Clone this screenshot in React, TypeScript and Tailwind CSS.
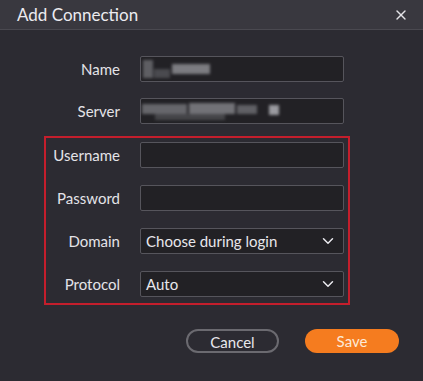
import { ChevronDown, X } from "lucide-react";

type RowProps = {
  label: string;
  children: React.ReactNode;
};

function Row({ label, children }: RowProps) {
  return (
    <div className="flex flex-row items-center gap-5">
      <label className="w-[74px] whitespace-nowrap text-right text-[15px] text-[#e4e3e8]">
        {label}
      </label>
      {children}
    </div>
  );
}

function Field({ children, className = "" }: { children?: React.ReactNode; className?: string }) {
  return (
    <div
      className={`relative flex h-[26px] w-[204px] items-center overflow-hidden rounded-[2px] border border-[#56555c] bg-[#222125] ${className}`}
    >
      {children}
    </div>
  );
}

function Select({ value, className = "" }: { value: string; className?: string }) {
  return (
    <Field className={className}>
      <span className="pl-[5px] text-[15px] text-[#e8e7ec]">{value}</span>
      <ChevronDown className="absolute right-[6px] h-[18px] w-[18px] text-[#e8e7ec]" strokeWidth={2} />
    </Field>
  );
}

function Blurred({ blocks }: { blocks: { x: number; w: number; c: string; y?: number; h?: number }[] }) {
  return (
    <div className="absolute inset-0 blur-[1.5px]">
      {blocks.map((b, i) => (
        <div
          key={i}
          className="absolute"
          style={{ left: b.x, width: b.w, top: b.y ?? 6, height: b.h ?? 12, background: b.c }}
        />
      ))}
    </div>
  );
}

export default function App() {
  return (
    <div
      className="flex h-[381px] w-[423px] flex-col bg-[#2c2b32]"
      style={{ fontFamily: "Lato, 'Noto Sans', sans-serif" }}
    >
      <div className="flex h-[30px] flex-row items-center justify-between border-b border-[#4a4950] bg-[#39383f] pl-[17px] pr-[14px]">
        <h2 className="text-[17px] text-[#ecebf0]">Add Connection</h2>
        <X className="h-[16px] w-[16px] text-[#e4e3e8]" strokeWidth={2} />
      </div>

      <div className="ml-[44px] mt-[24px] flex w-[306px] flex-col gap-4 border-2 border-transparent pr-[4px]">
        <Row label="Name">
          <Field>
            <Blurred
              blocks={[
                { x: 2, w: 10, c: "#5e5e63", y: 3, h: 18 },
                { x: 13, w: 16, c: "#4a4a4f", y: 12, h: 9 },
                { x: 31, w: 38, c: "#7c7c81", y: 7, h: 10 },
              ]}
            />
          </Field>
        </Row>
        <Row label="Server">
          <Field>
            <Blurred
              blocks={[
                { x: 1, w: 45, c: "#66666b", y: 5, h: 10 },
                { x: 48, w: 46, c: "#727277", y: 4, h: 11 },
                { x: 96, w: 20, c: "#606065", y: 6, h: 9 },
                { x: 128, w: 10, c: "#9a9aa0", y: 6, h: 10 },
                { x: 14, w: 70, c: "#454549", y: 15, h: 6 },
              ]}
            />
          </Field>
        </Row>
      </div>

      <div className="ml-[44px] mt-[10px] flex w-[306px] flex-col gap-[17px] border-2 border-[#c41e2c] pb-[6px] pr-[4px] pt-[4px]">
        <Row label="Username">
          <Field />
        </Row>
        <Row label="Password">
          <Field />
        </Row>
        <Row label="Domain">
          <Select value="Choose during login" />
        </Row>
        <Row label="Protocol">
          <Select value="Auto" className="border-[#6a5354]" />
        </Row>
      </div>

      <div className="mr-[24px] mt-[24px] flex flex-row justify-end gap-[26px]">
        <button className="h-[24px] w-[93px] rounded-full border-2 border-[#6b6a70] text-[15px] text-[#e8e7ec]">
          Cancel
        </button>
        <button className="h-[24px] w-[94px] rounded-full bg-[#f57c1f] text-[15px] text-[#fde9d6]">
          Save
        </button>
      </div>
    </div>
  );
}
